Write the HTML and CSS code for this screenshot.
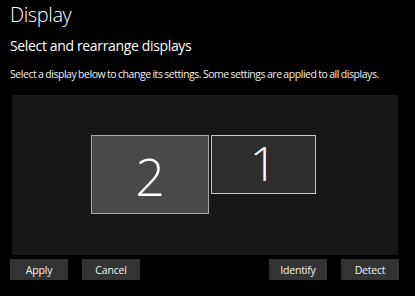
FILE: index.html
```html
<!DOCTYPE html>
<html>
<head>
<meta charset="utf-8">
<link rel="stylesheet" href="styles.css">
</head>
<body>
<div class="page">
  <h1 class="title">Display</h1>
  <h2 class="subtitle">Select and rearrange displays</h2>
  <p class="desc">Select a display below to change its settings. Some settings are applied to all displays.</p>
  <div class="canvas">
    <div class="monitor monitor-2 selected"><span class="num num-2">2</span></div>
    <div class="monitor monitor-1"><span class="num num-1">1</span></div>
  </div>
  <div class="actions">
    <div class="group">
      <button class="btn">Apply</button>
      <button class="btn">Cancel</button>
    </div>
    <div class="group">
      <button class="btn">Identify</button>
      <button class="btn">Detect</button>
    </div>
  </div>
</div>
</body>
</html>
```
FILE: styles.css
```css
html, body {
  margin: 0;
  padding: 0;
  background: #000;
  width: 415px;
  height: 296px;
  overflow: hidden;
}
.page {
  font-family: "Open Sans", "Noto Sans", sans-serif;
  color: #fff;
  padding: 0 16px 0 10px;
  display: flex;
  flex-direction: column;
}
.title {
  margin: 2px 0 0 0;
  font-size: 20px;
  font-weight: 300;
  line-height: 26px;
  letter-spacing: -0.4px;
}
.subtitle {
  margin: 9px 0 0 0;
  font-size: 14px;
  font-weight: 400;
  line-height: 18px;
  letter-spacing: -0.35px;
}
.desc {
  margin: 12px 0 0 0;
  font-size: 10.5px;
  line-height: 14px;
  letter-spacing: -0.45px;
  word-spacing: -0.5px;
  white-space: nowrap;
  color: #f0f0f0;
}
.canvas {
  position: relative;
  margin: 14px 1px 0 2px;
  height: 160px;
  background: #171717;
}
.monitor {
  position: absolute;
  box-sizing: border-box;
  border: 1px solid #b8b8b8;
  display: flex;
  justify-content: center;
  align-items: center;
}
.monitor-2 {
  left: 79px;
  top: 40px;
  width: 118px;
  height: 79px;
  background: #4a4949;
  border-color: #a9a9a9;
}
.monitor-1 {
  left: 199px;
  top: 40px;
  width: 105px;
  height: 59px;
  background: #2e2e2e;
  border-color: #c8c8c8;
}
.num {
  font-weight: 300;
  color: #fff;
  line-height: 1;
}
.num-2 {
  font-size: 52px;
  margin-top: 2px;
}
.num-1 {
  font-size: 48px;
  margin-top: -4px;
}
.actions {
  display: flex;
  justify-content: space-between;
  margin-top: 4px;
}
.group {
  display: flex;
  gap: 14px;
}
.btn {
  width: 58px;
  height: 21px;
  padding: 0;
  border: none;
  background: #333;
  color: #f2f2f2;
  font-family: "Open Sans", "Noto Sans", sans-serif;
  font-size: 10.5px;
  letter-spacing: -0.2px;
}
```
